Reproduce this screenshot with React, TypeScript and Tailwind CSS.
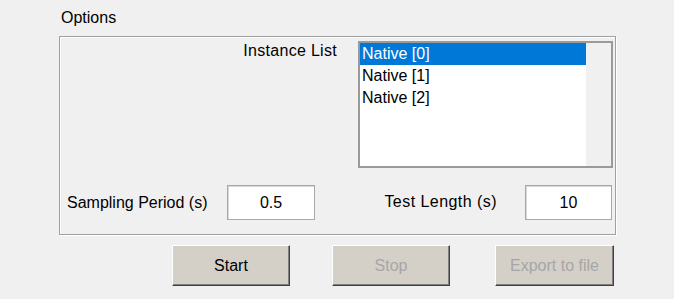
const ITEMS = ['Native [0]', 'Native [1]', 'Native [2]']

function Button({ label, disabled, className }: { label: string; disabled?: boolean; className?: string }) {
  return (
    <button
      disabled={disabled}
      className={`w-[118px] h-[41px] bg-[#d4d0c8] border-t border-l border-white border-r border-b border-r-[#404040] border-b-[#404040] shadow-[inset_-1px_-1px_0_#808080] text-[16px] ${
        disabled ? 'text-[#a6a6a6]' : 'text-black'
      } ${className ?? ''}`}
    >
      {label}
    </button>
  )
}

export default function App() {
  const selected = 0

  return (
    <div className="w-[674px] h-[299px] bg-[#f0f0f0] text-black text-[16px] leading-[18px] font-['Liberation_Sans',Arial,sans-serif] overflow-hidden">
      <div className="pt-[9px] pl-[61px]">Options</div>

      {/* Options group box */}
      <div className="ml-[59px] mt-[9px] w-[557px] h-[199px] border border-[#a0a0a0] shadow-[inset_1px_1px_0_#fff,1px_1px_0_#fff] pt-[4px] pr-[2px] flex flex-col">
        <div className="flex justify-end items-start">
          <span className="mr-[21px] mt-[1px] tracking-[0.3px]">Instance List</span>
          <div className="w-[255px] h-[127px] border-2 border-[#9a9a9a] bg-white flex">
            <div className="flex-1 flex flex-col">
              {ITEMS.map((item, i) => (
                <div
                  key={item}
                  className={`h-[22px] pl-[2px] flex items-center ${
                    i === selected ? 'bg-[#0078d7] text-white' : 'text-black'
                  }`}
                >
                  {item}
                </div>
              ))}
            </div>
            {/* empty scrollbar track */}
            <div className="w-[25px] bg-[#f0f0f0]" />
          </div>
        </div>

        <div className="mt-[17px] flex items-center pl-[7px]">
          <span className="w-[160px]">Sampling Period (s)</span>
          <div className="w-[88px] h-[35px] bg-white border border-[#a8a8a8] shadow-[inset_1px_1px_0_#d8d8d8] flex items-center justify-center">
            0.5
          </div>
          <div className="ml-auto flex items-center">
            <span className="mr-[28px] -mt-[2px] tracking-[0.45px]">Test Length (s)</span>
            <div className="w-[87px] h-[35px] bg-white border border-[#a8a8a8] shadow-[inset_1px_1px_0_#d8d8d8] flex items-center justify-center mr-[1px]">
              10
            </div>
          </div>
        </div>
      </div>

      <div className="mt-[10px] pl-[172px] flex">
        <Button label="Start" />
        <Button label="Stop" disabled className="ml-[42px]" />
        <Button label="Export to file" disabled className="ml-[45px] w-[119px]" />
      </div>
    </div>
  )
}
